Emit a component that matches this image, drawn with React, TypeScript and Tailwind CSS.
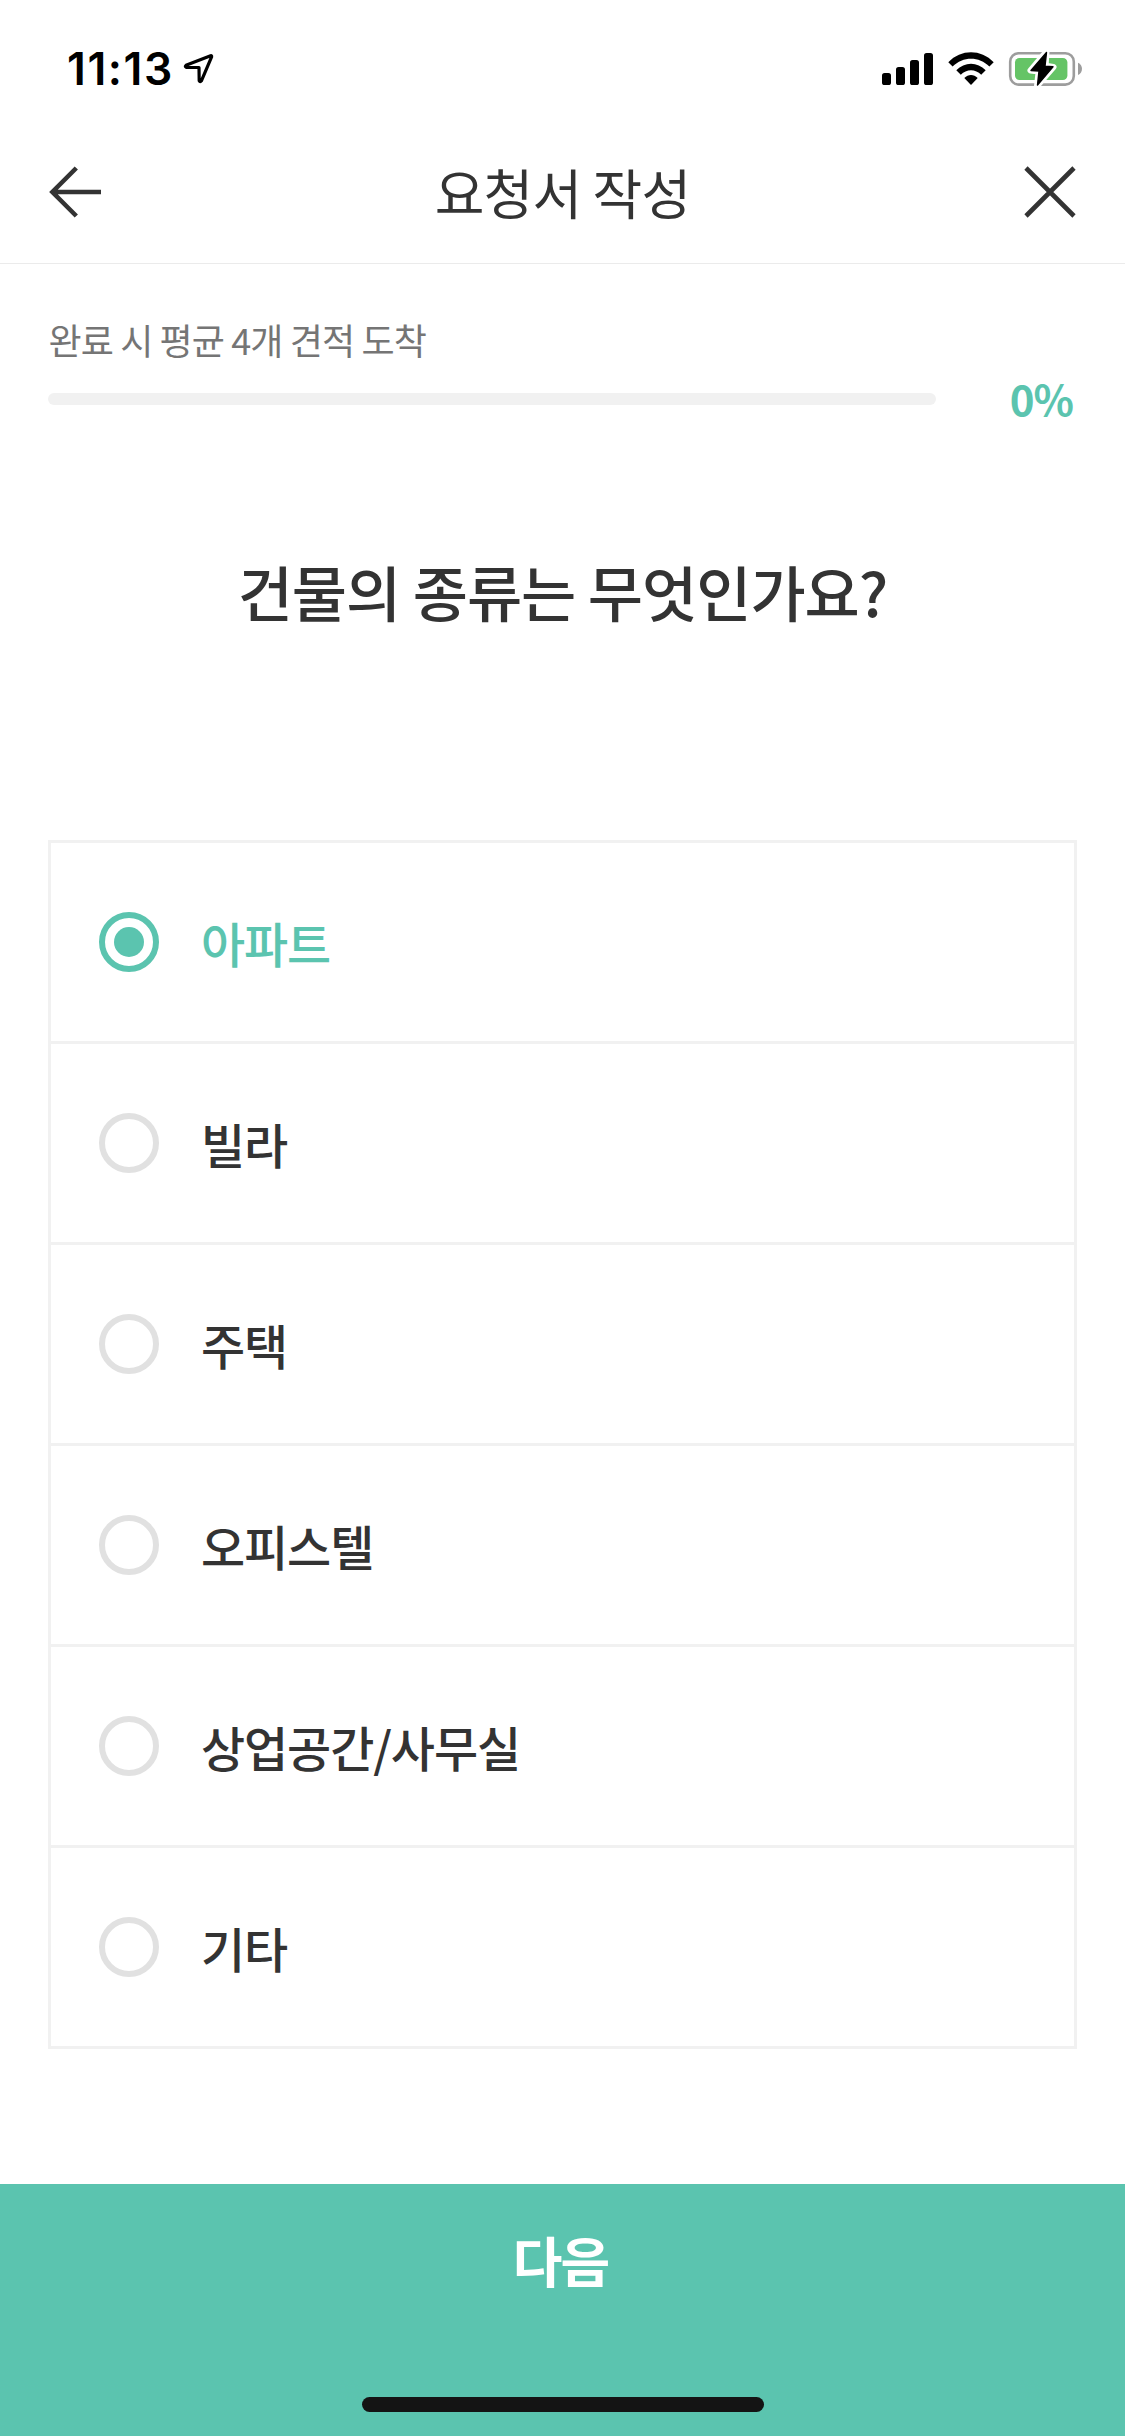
import { useState } from "react";

const options = ["아파트", "빌라", "주택", "오피스텔", "상업공간/사무실", "기타"];

function StatusBar() {
  return (
    <div className="flex h-[132px] shrink-0 items-start justify-between pr-[42px] pl-[67px]">
      <div className="flex pt-[42px]">
        <span className="w-[112px] font-['Inter',sans-serif] text-[44.5px] leading-[54px] font-semibold tracking-[1.6px] whitespace-nowrap text-black">
          11:13
        </span>
        <svg className="mt-[10px] ml-[3px] h-[34px] w-[34px]" viewBox="182 52 34 34" fill="none">
          <path
            d="M210.6 55.8 186 65.3Q184.6 66.6 186.2 67.3L199 67.5 199.2 80.6Q200.2 82.4 201.4 80.8L211.6 56.8Q211.9 55.4 210.6 55.8Z"
            stroke="#000"
            strokeWidth="3.2"
            strokeLinejoin="round"
          />
        </svg>
      </div>
      <svg className="mt-[48px] h-[42px] w-[201px]" viewBox="882 48 201 42">
        <rect x="882" y="73" width="9" height="12" rx="2.6" />
        <rect x="896" y="67" width="9" height="18" rx="2.6" />
        <rect x="910" y="60" width="9" height="25" rx="2.6" />
        <rect x="924" y="53" width="9" height="32" rx="2.6" />
        <path d="M948.3 62.3C961 49 981 49 993.7 62.3L989.4 66.6C979 56 963 56 952.6 66.6Z" />
        <path d="M956.3 70.3C964.5 61.4 977.5 61.4 985.7 70.3L981.2 74.8C975.5 68.8 966.5 68.8 960.8 74.8Z" />
        <path d="M964.3 78C968.3 74 973.7 74 977.7 78L971 85Z" />
        <rect x="1010.2" y="53.2" width="63.6" height="31.4" rx="8.5" fill="none" stroke="#9d9d9d" strokeWidth="2.6" />
        <path d="M1078 62.7C1083.3 64.5 1083.3 73.2 1078 75Z" fill="#9d9d9d" />
        <rect x="1015" y="58" width="52.4" height="22" rx="4.5" fill="#65c466" />
        <path
          d="M1046.5 51.5 1030.5 70.5 1038.6 71.5 1037 86 1053.5 67 1045.6 65.8Z"
          fill="#000"
          stroke="#fff"
          strokeWidth="6"
          strokeLinejoin="round"
        />
        <path
          d="M1046.5 52.5 1031 70.5 1039 71 1037.5 85 1053 66.8 1045 66.2Z"
          fill="#000"
          stroke="#000"
          strokeWidth="1.4"
          strokeLinejoin="round"
        />
      </svg>
    </div>
  );
}

function Header() {
  return (
    <header className="flex h-[132px] shrink-0 items-start justify-between border-b border-[#ebebeb] px-[48px]">
      <button aria-label="뒤로" className="mt-[33px] h-[54px] w-[54px]">
        <svg viewBox="48 165 54 54" fill="none" stroke="#333" strokeWidth="4.6">
          <path d="M76.3 168 52.4 192 76.3 216M53 192H101" />
        </svg>
      </button>
      <h1 className="mt-[21px] text-[54px] leading-[78px] font-normal tracking-[-0.8px] text-[#333]">요청서 작성</h1>
      <button aria-label="닫기" className="mt-[33px] h-[54px] w-[54px]">
        <svg viewBox="1023 165 54 54" fill="none" stroke="#333" strokeWidth="4.6">
          <path d="M1026 168 1074 216M1074 168 1026 216" />
        </svg>
      </button>
    </header>
  );
}

function Progress() {
  return (
    <section className="px-[48px] pt-[48px]">
      <p className="pl-[0.5px] text-[36px] leading-[54px] tracking-[-0.88px] text-[#757575]">완료 시 평균 4개 견적 도착</p>
      <div className="mt-[3px] flex h-[60px] items-center justify-between">
        <div className="h-[12px] w-[888px] rounded-full bg-[#f1f1f1]" />
        <span className="pr-[4px] pb-[2px] text-[42px] leading-[60px] font-bold tracking-[-1px] text-[#5bc4af]">0%</span>
      </div>
    </section>
  );
}

export default function App() {
  const [selected, setSelected] = useState(0);
  return (
    <div className="flex h-[2436px] w-[1125px] flex-col bg-white font-['Noto_Sans_CJK_KR',sans-serif]">
      <StatusBar />
      <Header />
      <Progress />
      <h2 className="mt-[117px] text-center text-[60px] leading-[90px] font-medium tracking-[-1px] text-[#333]">
        건물의 종류는 무엇인가요?
      </h2>
      <ul className="mx-[48px] mt-[204px] divide-y-[3px] divide-[#f1f1f1] border-[3px] border-[#f1f1f1]">
        {options.map((label, i) => (
          <li key={label}>
            <button onClick={() => setSelected(i)} className="flex h-[198px] w-full items-center gap-[42px] pl-[48px] text-left">
              <span
                className={
                  i === selected
                    ? "flex size-[60px] items-center justify-center rounded-full border-[6px] border-[#5bc4af]"
                    : "size-[60px] rounded-full border-[6px] border-[#e1e1e1]"
                }
              >
                {i === selected && <span className="size-[30px] rounded-full bg-[#5bc4af]" />}
              </span>
              <span
                className={
                  i === selected
                    ? "text-[48px] leading-[72px] font-medium tracking-[-1.1px] text-[#5bc4af]"
                    : "text-[48px] leading-[72px] font-medium tracking-[-1.1px] text-[#333]"
                }
              >
                {label}
              </span>
            </button>
          </li>
        ))}
      </ul>
      <footer className="mt-auto flex h-[252px] shrink-0 flex-col items-center justify-between bg-[#5bc4af] pt-[34px] pb-[24px]">
        <button className="pr-[4px] text-[54px] leading-[84px] font-bold tracking-[-2px] text-white">다음</button>
        <div className="h-[15px] w-[402px] rounded-full bg-[#141414]" />
      </footer>
    </div>
  );
}
